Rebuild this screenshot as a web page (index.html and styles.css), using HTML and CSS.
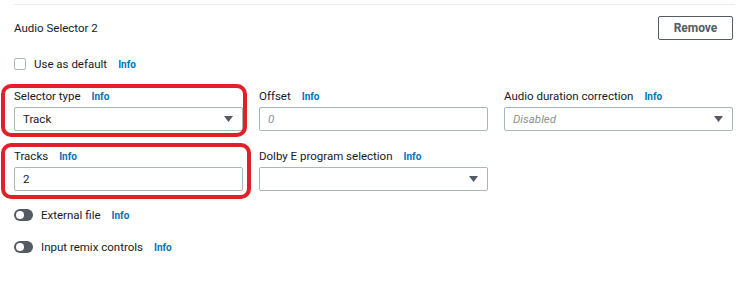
FILE: index.html
```html
<!DOCTYPE html>
<html lang="en">
<head>
  <meta charset="UTF-8">
  <title>Audio Selector 2</title>
  <link rel="stylesheet" href="styles.css">
</head>
<body>

  <div class="panel">
    <div class="rule"></div>

    <div class="header">
      <span class="title">Audio Selector 2</span>
      <button class="btn">Remove</button>
    </div>

    <div class="check-row">
      <span class="checkbox"></span>
      <span class="label">Use as default</span>
      <a class="info">Info</a>
    </div>

    <div class="grid">
      <div class="field mark mark-1">
        <div class="field-label">Selector type<a class="info">Info</a></div>
        <div class="select">
          <span>Track</span>
          <svg class="caret" width="9" height="6" viewBox="0 0 9 6"><path d="M0 0h9L4.5 6z"/></svg>
        </div>
      </div>
      <div class="field">
        <div class="field-label">Offset<a class="info">Info</a></div>
        <div class="input placeholder">0</div>
      </div>
      <div class="field">
        <div class="field-label">Audio duration correction<a class="info">Info</a></div>
        <div class="select">
          <span class="placeholder">Disabled</span>
          <svg class="caret" width="9" height="6" viewBox="0 0 9 6"><path d="M0 0h9L4.5 6z"/></svg>
        </div>
      </div>

      <div class="field mark mark-2">
        <div class="field-label">Tracks<a class="info">Info</a></div>
        <div class="input">2</div>
      </div>
      <div class="field">
        <div class="field-label">Dolby E program selection<a class="info">Info</a></div>
        <div class="select">
          <span></span>
          <svg class="caret" width="9" height="6" viewBox="0 0 9 6"><path d="M0 0h9L4.5 6z"/></svg>
        </div>
      </div>
    </div>

    <div class="toggle-row">
      <span class="toggle"></span>
      <span class="label">External file</span>
      <a class="info">Info</a>
    </div>
    <div class="toggle-row">
      <span class="toggle"></span>
      <span class="label">Input remix controls</span>
      <a class="info">Info</a>
    </div>
  </div>

</body>
</html>
```

FILE: styles.css
```css
body {
  margin: 0;
  background: #fff;
  font-family: Roboto, "Liberation Sans", Arial, sans-serif;
  font-size: 11.5px;
  color: #16191f;
}

.panel { padding: 4px 10px 0 14px; }

.rule {
  height: 1px;
  background: #eaeded;
  margin-right: -2px;
}

.header {
  display: flex;
  justify-content: space-between;
  align-items: center;
  margin-top: 11px;
  height: 24px;
}

.btn {
  width: 75px;
  height: 24px;
  border: 1px solid #545b64;
  border-radius: 2px;
  background: #fff;
  color: #545b64;
  font-family: inherit;
  font-size: 12px;
  font-weight: bold;
  padding: 0;
}

.info {
  color: #0073bb;
  font-size: 10px;
  font-weight: bold;
  margin-left: 11px;
}

.check-row {
  display: flex;
  align-items: center;
  height: 20px;
  margin-top: 14px;
}

.checkbox {
  width: 10px;
  height: 10px;
  border: 1px solid #aab7b8;
  border-radius: 2px;
  margin-right: 8px;
}

.grid {
  display: grid;
  grid-template-columns: 229px 229px 229px;
  column-gap: 16px;
  row-gap: 17px;
  margin-top: 14px;
}

.field { position: relative; }

.field-label {
  height: 16px;
  line-height: 16px;
  margin-bottom: 3px;
}

.select, .input {
  display: flex;
  align-items: center;
  justify-content: space-between;
  box-sizing: border-box;
  height: 24px;
  border: 1px solid #aab7b8;
  border-radius: 2px;
  padding: 0 9px 0 8px;
}

.placeholder {
  color: #879596;
  font-style: italic;
}

.caret { fill: #545b64; }

/* red annotation rings */
.mark::after {
  content: "";
  position: absolute;
  border: 4px solid #e3202a;
  border-radius: 10px;
}
.mark-1::after { top: -4px; bottom: -6px; left: -13px; right: -4px; }
.mark-2::after { top: -5px; bottom: -8px; left: -13px; right: -8px; }

.toggle-row {
  display: flex;
  align-items: center;
  height: 20px;
  margin-top: 12px;
}
.grid + .toggle-row { margin-top: 14px; }

.toggle {
  position: relative;
  width: 19px;
  height: 12px;
  border-radius: 6px;
  background: #545b64;
  margin-right: 8px;
}
.toggle::after {
  content: "";
  position: absolute;
  left: 2px;
  top: 2px;
  width: 8px;
  height: 8px;
  border-radius: 50%;
  background: #fff;
}
```
